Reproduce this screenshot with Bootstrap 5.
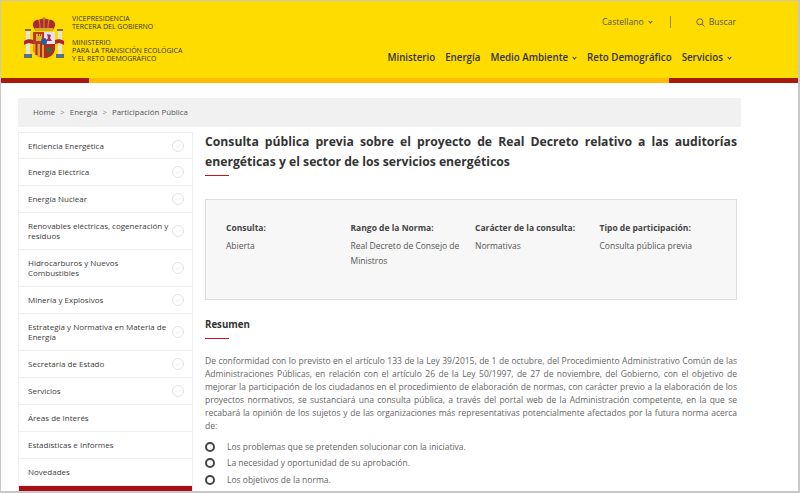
<!DOCTYPE html>
<html lang="es">
<head>
<meta charset="utf-8">
<title>Consulta pública previa</title>
<link href="https://cdn.jsdelivr.net/npm/bootstrap@5.3.0/dist/css/bootstrap.min.css" rel="stylesheet">
<style>
html,body{height:493px;overflow:hidden;background:#fff}
body{font-family:"Open Sans",sans-serif;color:#555;font-size:9.5px}
.frame{height:493px;border:1px solid #c8c8c8;border-bottom-width:2px;border-right-width:2px;overflow:hidden;position:relative}
.top-yellow{background:#ffdc00;height:77px;padding:0 0 0 23px}
.strip{height:5px;background:#ffbc00}
.strip-a{width:88px;background:#a81a0a}
.strip-b{width:129px;background:#a81a0a}
.crest{width:40px;height:42px;margin-top:16px;flex:none}
.org{margin-left:8px;padding-top:14px;font-size:7px;line-height:8px;color:#333}
.org p{margin:0 0 8px}
.util{font-size:8.6px;color:#555;height:24px;padding-right:62px;margin-top:9px}
.sep{width:1px;height:12px;background:#9c8f20;margin:0 25px 0 17px}
.mainnav{font-size:9.75px;font-weight:600;color:#333;gap:10px;padding-right:66px;margin-top:17px}
.caret{display:inline-block;width:3px;height:3px;border-right:1px solid currentColor;border-bottom:1px solid currentColor;transform:rotate(45deg);margin:0 1px 2px 5px}
.crumbs{margin:15px 57px 5px 17px;height:29px;background:#f1f1f1;padding:0 15px;font-size:7.9px;color:#555;gap:4px}
.crumbs i{font-style:normal;color:#888;margin:0 1px}
.cols{margin-left:17px;gap:12px}
.side{width:175px;flex:none;border:1px solid #eee;border-bottom:0}
.side-item{min-height:27px;padding:4px 8px 4px 9px;border-bottom:1.5px solid #eee;font-size:8px;line-height:10px;color:#3c3c3c;gap:2px}
.side-item:first-child{min-height:26px}
.side-item.tall{min-height:37px}
.side-item span{flex:1}
.tick{width:12px;height:12px;flex:none}
.side-active{height:12px;background:#a80f17}
.art{width:532px;flex:none}
.art h1{font-size:12.2px;font-weight:700;line-height:20px;color:#333;margin:0;text-align:justify}
.rule{width:24px;height:1px;background:#c4161c;margin-top:3px}
.info{margin-top:23px;height:101px;background:#f7f7f7;border:1px solid #ddd;padding:20px 12px 0 20px}
.info-col{width:124.5px;flex:none;line-height:15px;font-size:8.5px;color:#555}
.info-col b{display:block;font-weight:700;color:#444;margin-bottom:3px}
.art h2{font-size:9.7px;font-weight:700;color:#333;margin:18px 0 0;line-height:13px}
.art h2 + .rule{margin-top:7px}
.art p{font-size:8.5px;line-height:13px;margin:14.5px 0 0;text-align:justify;color:#666}
.bul{margin:7px 0 0;padding:0;list-style:none;font-size:8.5px;line-height:16.5px;color:#666}
.bul li{display:flex;align-items:center;gap:12px}
.bul li::before{content:"";width:10px;height:10px;border:2px solid #444;border-radius:50%;flex:none}
</style>
</head>
<body>
<div class="frame">
  <header>
    <div class="top-yellow d-flex justify-content-between">
      <div class="d-flex">
        <svg class="crest" viewBox="0 0 40 42" aria-hidden="true">
          <path d="M1 12h6v2H1zM33 12h6v2h-6z" fill="#8a6a28"/>
          <path d="M2 14h4v23H2zM34 14h4v23h-4z" fill="#e8e4d6"/>
          <path d="M0 37h8v4H0zM32 37h8v4h-8z" fill="#5a6f8a"/>
          <path d="M0 24c3-2 6-2 9-1v4c-3-1-6-1-9 1zM40 24c-3-2-6-2-9-1v4c3-1 6-1 9 1z" fill="#b0262a"/>
          <path d="M9 9c-1-4 3-7 6-6 2-2 8-2 10 0 3-1 7 2 6 6l-2 4H11z" fill="#ad2a2c"/>
          <path d="M11 11h18v3H11z" fill="#d7a72a"/>
          <path d="M15 3c1 3 1 6 1 8M25 3c-1 3-1 6-1 8M20 2v9" stroke="#d7a72a" stroke-width=".9" fill="none"/>
          <circle cx="20" cy="1.500" r="1.500" fill="#b98f2a"/>
          <path d="M9 15h22v15c0 7-5 11-11 11S9 37 9 30z" fill="#c0272d"/>
          <path d="M20 15h11v12H20z" fill="#e8dfe8"/>
          <path d="M9 15h11v12H9z" fill="#b73b20"/>
          <path d="M12 17h2v2h1v-2h1v2h1v-2h1v7h-6z" fill="#e2b232"/>
          <path d="M23 17l4 1-1 3 2 3h-6l2-3z" fill="#a33060"/>
          <path d="M9 27h11v14c-6 0-11-4-11-11z" fill="#dba62a"/>
          <path d="M11.500 27h2v11h-2zM16 27h2v13h-2z" fill="#b4262a"/>
          <path d="M20 27h11v3c0 7-5 11-11 11z" fill="#b52a20"/>
          <circle cx="25" cy="33" r="3" fill="#3c6a3a"/>
          <ellipse cx="20" cy="24.500" rx="3" ry="3.500" fill="#2d5a9a"/>
        </svg>
        <div class="org">
          <p>VICEPRESIDENCIA<br>TERCERA DEL GOBIERNO</p>
          <p class="mb-0">MINISTERIO<br>PARA LA TRANSICIÓN ECOLÓGICA<br>Y EL RETO DEMOGRÁFICO</p>
        </div>
      </div>
      <div class="d-flex flex-column align-items-end">
        <div class="util d-flex align-items-center">
          <span>Castellano<i class="caret"></i></span>
          <span class="sep"></span>
          <svg width="9" height="9" viewBox="0 0 9 9" class="me-1" aria-hidden="true"><circle cx="3.800" cy="3.800" r="3" fill="none" stroke="#555" stroke-width=".9"/><path d="M6 6l2.500 2.500" stroke="#555" stroke-width=".9"/></svg>
          <span>Buscar</span>
        </div>
        <nav class="mainnav d-flex">
          <span>Ministerio</span><span>Energía</span><span>Medio Ambiente<i class="caret"></i></span><span>Reto Demográfico</span><span>Servicios<i class="caret"></i></span>
        </nav>
      </div>
    </div>
    <div class="strip d-flex justify-content-between"><div class="strip-a"></div><div class="strip-b"></div></div>
  </header>
  <div class="crumbs d-flex align-items-center"><span>Home</span><i>&gt;</i><span>Energía</span><i>&gt;</i><span>Participación Pública</span></div>
  <div class="cols d-flex">
    <aside class="side">
      <div class="side-item d-flex align-items-center"><span>Eficiencia Energética</span><svg class="tick" viewBox="0 0 12 12"><circle cx="6" cy="6" r="5.500" fill="none" stroke="#e2e2e2"/><path d="M4 6l1.500 1.500L8 5" fill="none" stroke="#e6e6e6" stroke-width=".7"/></svg></div>
      <div class="side-item d-flex align-items-center"><span>Energía Eléctrica</span><svg class="tick" viewBox="0 0 12 12"><circle cx="6" cy="6" r="5.500" fill="none" stroke="#e2e2e2"/><path d="M4 6l1.500 1.500L8 5" fill="none" stroke="#e6e6e6" stroke-width=".7"/></svg></div>
      <div class="side-item d-flex align-items-center"><span>Energía Nuclear</span><svg class="tick" viewBox="0 0 12 12"><circle cx="6" cy="6" r="5.500" fill="none" stroke="#e2e2e2"/><path d="M4 6l1.500 1.500L8 5" fill="none" stroke="#e6e6e6" stroke-width=".7"/></svg></div>
      <div class="side-item tall d-flex align-items-center"><span>Renovables eléctricas, cogeneración y residuos</span><svg class="tick" viewBox="0 0 12 12"><circle cx="6" cy="6" r="5.500" fill="none" stroke="#e2e2e2"/><path d="M4 6l1.500 1.500L8 5" fill="none" stroke="#e6e6e6" stroke-width=".7"/></svg></div>
      <div class="side-item tall d-flex align-items-center"><span>Hidrocarburos y Nuevos Combustibles</span><svg class="tick" viewBox="0 0 12 12"><circle cx="6" cy="6" r="5.500" fill="none" stroke="#e2e2e2"/><path d="M4 6l1.500 1.500L8 5" fill="none" stroke="#e6e6e6" stroke-width=".7"/></svg></div>
      <div class="side-item d-flex align-items-center"><span>Minería y Explosivos</span><svg class="tick" viewBox="0 0 12 12"><circle cx="6" cy="6" r="5.500" fill="none" stroke="#e2e2e2"/><path d="M4 6l1.500 1.500L8 5" fill="none" stroke="#e6e6e6" stroke-width=".7"/></svg></div>
      <div class="side-item tall d-flex align-items-center"><span>Estrategia y Normativa en Materia de Energía</span><svg class="tick" viewBox="0 0 12 12"><circle cx="6" cy="6" r="5.500" fill="none" stroke="#e2e2e2"/><path d="M4 6l1.500 1.500L8 5" fill="none" stroke="#e6e6e6" stroke-width=".7"/></svg></div>
      <div class="side-item d-flex align-items-center"><span>Secretaría de Estado</span><svg class="tick" viewBox="0 0 12 12"><circle cx="6" cy="6" r="5.500" fill="none" stroke="#e2e2e2"/><path d="M4 6l1.500 1.500L8 5" fill="none" stroke="#e6e6e6" stroke-width=".7"/></svg></div>
      <div class="side-item d-flex align-items-center"><span>Servicios</span><svg class="tick" viewBox="0 0 12 12"><circle cx="6" cy="6" r="5.500" fill="none" stroke="#e2e2e2"/><path d="M4 6l1.500 1.500L8 5" fill="none" stroke="#e6e6e6" stroke-width=".7"/></svg></div>
      <div class="side-item d-flex align-items-center"><span>Áreas de Interés</span></div>
      <div class="side-item d-flex align-items-center"><span>Estadísticas e Informes</span></div>
      <div class="side-item d-flex align-items-center"><span>Novedades</span></div>
      <div class="side-active"></div>
    </aside>
    <main class="art">
      <h1>Consulta pública previa sobre el proyecto de Real Decreto relativo a las auditorías energéticas y el sector de los servicios energéticos</h1>
      <div class="rule"></div>
      <section class="info d-flex">
        <div class="info-col"><b>Consulta:</b>Abierta</div>
        <div class="info-col"><b>Rango de la Norma:</b>Real Decreto de Consejo de Ministros</div>
        <div class="info-col"><b>Carácter de la consulta:</b>Normativas</div>
        <div class="info-col"><b>Tipo de participación:</b>Consulta pública previa</div>
      </section>
      <h2>Resumen</h2>
      <div class="rule"></div>
      <p>De conformidad con lo previsto en el artículo 133 de la Ley 39/2015, de 1 de octubre, del Procedimiento Administrativo Común de las Administraciones Públicas, en relación con el artículo 26 de la Ley 50/1997, de 27 de noviembre, del Gobierno, con el objetivo de mejorar la participación de los ciudadanos en el procedimiento de elaboración de normas, con carácter previo a la elaboración de los proyectos normativos, se sustanciará una consulta pública, a través del portal web de la Administración competente, en la que se recabará la opinión de los sujetos y de las organizaciones más representativas potencialmente afectados por la futura norma acerca de:</p>
      <ul class="bul">
        <li>Los problemas que se pretenden solucionar con la iniciativa.</li>
        <li>La necesidad y oportunidad de su aprobación.</li>
        <li>Los objetivos de la norma.</li>
      </ul>
    </main>
  </div>
</div>
<script src="https://cdn.jsdelivr.net/npm/bootstrap@5.3.0/dist/js/bootstrap.bundle.min.js"></script>
</body>
</html>
